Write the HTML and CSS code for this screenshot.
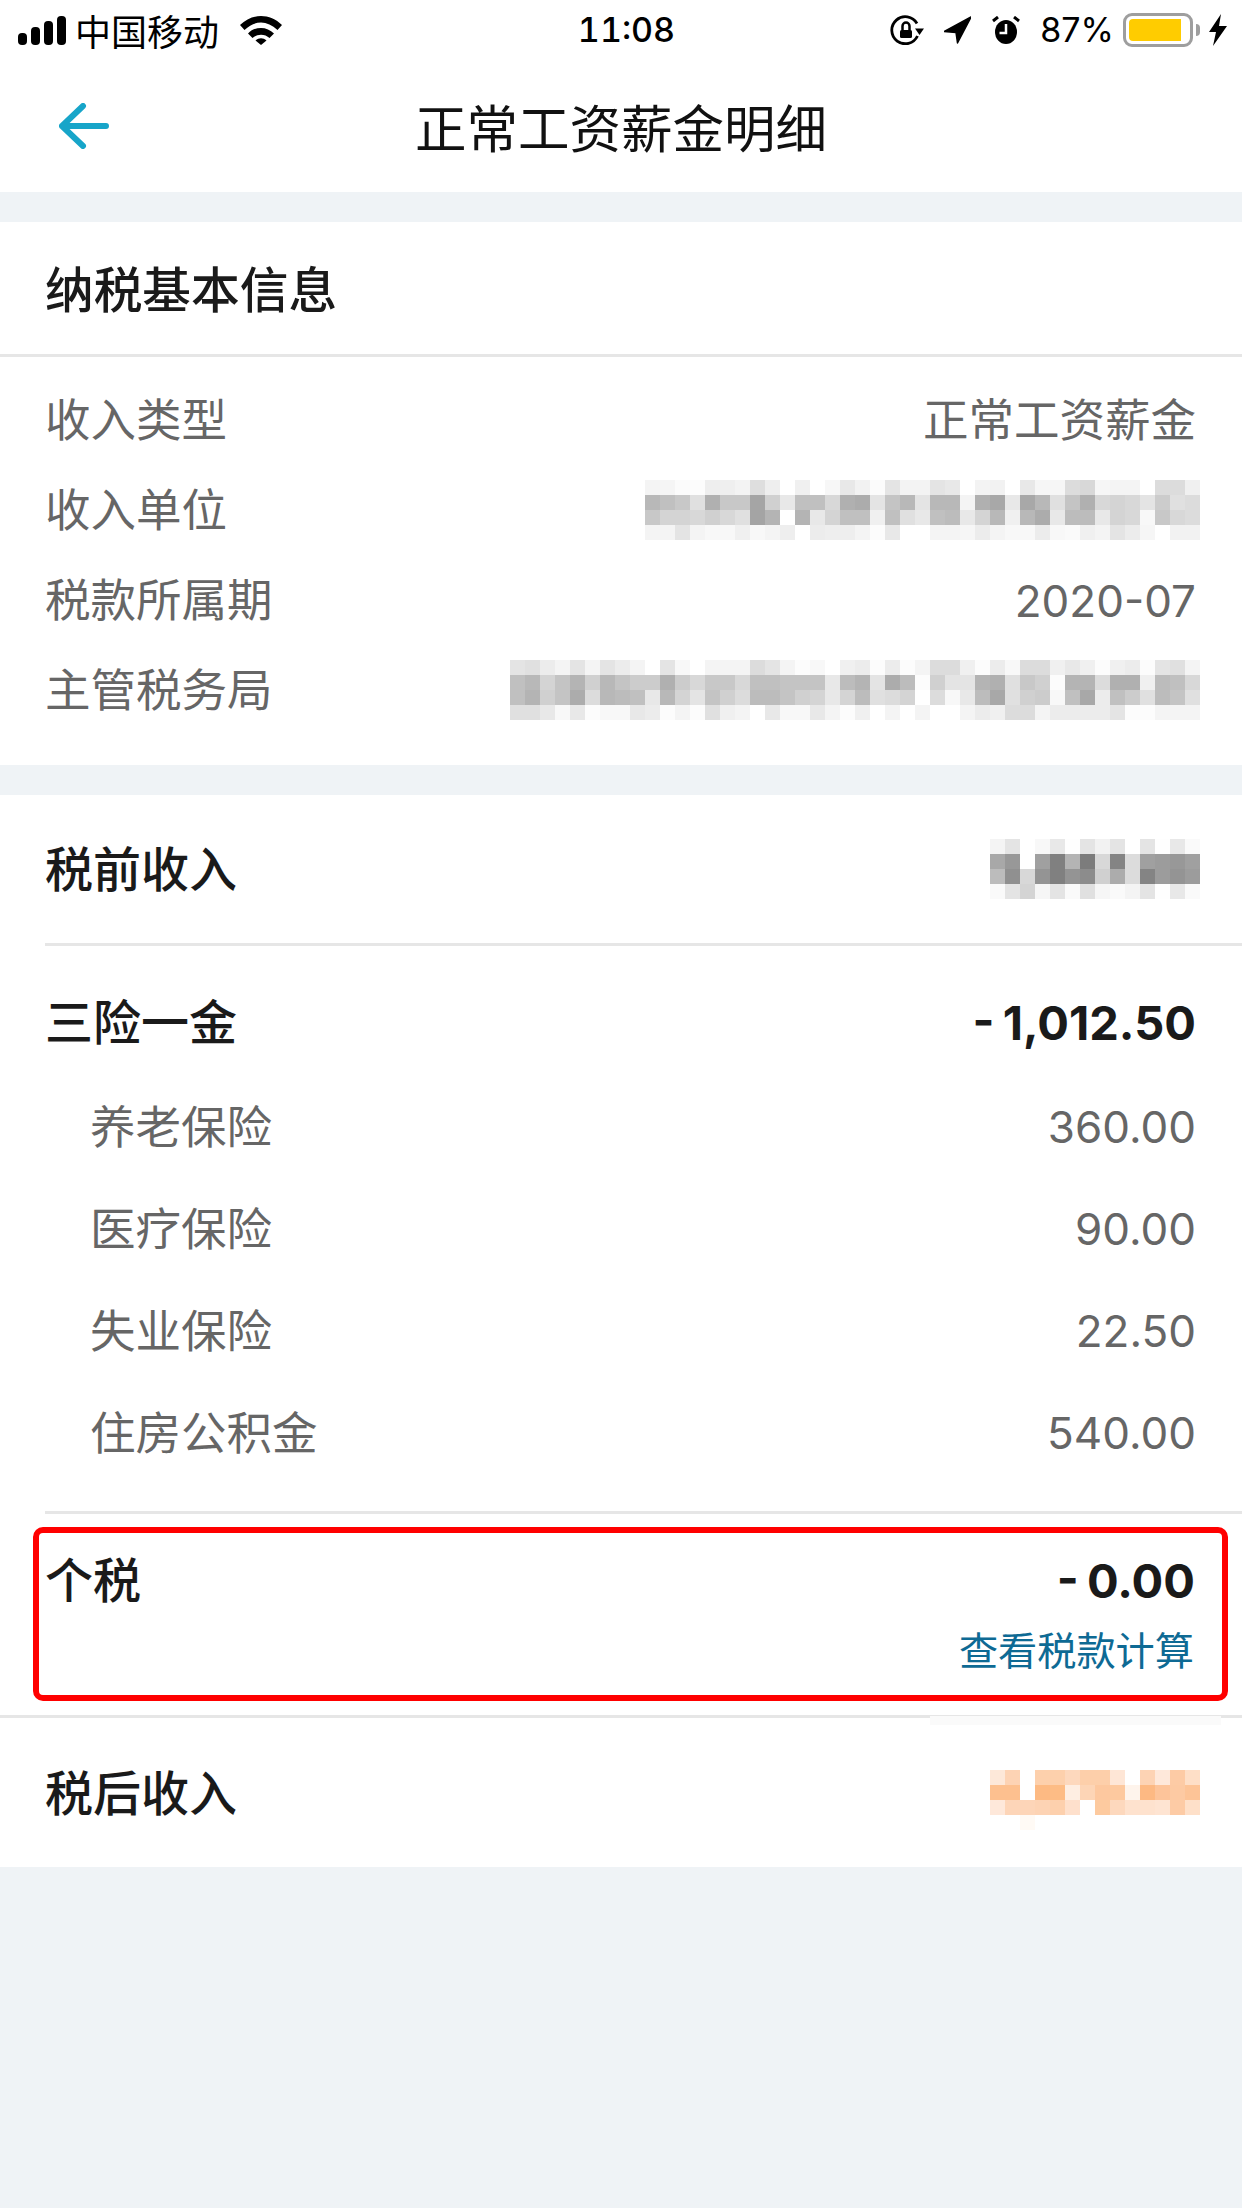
FILE: index.html
```html
<!DOCTYPE html>
<html lang="zh-CN">
<head>
<meta charset="utf-8">
<title>正常工资薪金明细</title>
<link rel="stylesheet" href="styles.css">
</head>
<body>
<div class="screen">
  <header class="status">
    <div class="status-left">
      <svg class="ic-signal" viewBox="0 0 48 29"><rect x="0" y="17" width="9" height="12" rx="4"/><rect x="13" y="11" width="9" height="18" rx="4"/><rect x="26" y="5" width="9" height="24" rx="4"/><rect x="39" y="0" width="9" height="29" rx="4"/></svg>
      <span class="carrier">中国移动</span>
      <svg class="ic-wifi" viewBox="0 0 42 29"><path d="M0 9C12-3 30-3 42 9L37.5 14C27 4 15 4 4.500 14Z"/><path d="M8 17.500C15 10 27 10 34 17.500L29.500 22C25 17.500 17 17.500 12.500 22Z"/><path d="M15.500 24.500C19 21.500 23 21.500 26.500 24.500L21 29Z"/></svg>
    </div>
    <div class="time">11:08</div>
    <div class="status-right">
      <svg class="ic-lock" viewBox="0 0 34 30"><path class="line" d="M27.500 21A13.500 13.500 0 1 1 27 8.500"/><path d="M25 13.500H34L29.500 20Z"/><rect x="10" y="15" width="12" height="8" rx="1.500"/><path class="line thin" d="M12.500 15V11A3.500 3.500 0 0 1 19.500 11V15"/></svg>
      <svg class="ic-loc" viewBox="0 0 27 28"><path d="M27 1L0 15.500 12 16.500 13.500 27Z" class="rounded"/></svg>
      <svg class="ic-alarm" viewBox="0 0 28 28"><ellipse cx="14" cy="16" rx="11" ry="12"/><path class="ear" d="M1 5L6 1M27 5L22 1"/><path class="hand" d="M14 8V17H7.500"/></svg>
      <span class="pct">87%</span>
      <div class="battery"><div class="battery-fill"></div></div>
      <div class="battery-nub"></div>
      <svg class="ic-bolt" viewBox="0 0 18 32"><path d="M12 0L0 18H7L4 32 18 12H10Z"/></svg>
    </div>
  </header>

  <nav class="nav">
    <svg class="back" viewBox="0 0 50 46"><path d="M24 3L3 23 24 43M3 23H47"/></svg>
    <h1 class="nav-title">正常工资薪金明细</h1>
    <span></span>
  </nav>

  <section class="card card-first">
    <h2 class="card-head">纳税基本信息</h2>
    <div class="info">
      <div class="row info-row"><span>收入类型</span><span>正常工资薪金</span></div>
      <div class="row info-row"><span>收入单位</span><div class="mosaic" data-key="unit"></div></div>
      <div class="row info-row"><span>税款所属期</span><span class="num">2020-07</span></div>
      <div class="row info-row"><span>主管税务局</span><div class="mosaic" data-key="bureau"></div></div>
    </div>
  </section>

  <section class="card card-second">
    <div class="row strong-row pre"><span class="lift">税前收入</span><div class="mosaic" data-key="gross"></div></div>
    <div class="rule-inset"></div>
    <div class="row strong-row ins"><span class="lift">三险一金</span><span class="num-b">- 1,012.50</span></div>
    <div class="subs">
      <div class="row sub-row"><span class="lift">养老保险</span><span class="num">360.00</span></div>
      <div class="row sub-row"><span class="lift">医疗保险</span><span class="num">90.00</span></div>
      <div class="row sub-row"><span class="lift">失业保险</span><span class="num">22.50</span></div>
      <div class="row sub-row"><span class="lift">住房公积金</span><span class="num">540.00</span></div>
    </div>
    <div class="rule-inset"></div>
    <div class="tax-box">
      <div class="tax-main"><span class="lift">个税</span><span class="num-b">- 0.00</span></div>
      <a class="tax-link">查看税款计算</a>
    </div>
    <div class="rule-full"></div>
    <div class="row strong-row post"><span class="lift">税后收入</span><div class="mosaic" data-key="net"></div><i class="smudge"></i></div>
  </section>
</div>
<script src="app.js"></script>
</body>
</html>
```

FILE: styles.css
```css
* { box-sizing: border-box; }
html, body { margin: 0; padding: 0; }
body { width: 1242px; height: 2208px; overflow: hidden; background: #eff3f6; font-family: Inter, "Noto Sans CJK SC", sans-serif; }
.screen { display: flex; flex-direction: column; width: 1242px; }

.status { display: grid; grid-template-columns: 1fr auto 1fr; align-items: center; height: 60px; background: #fff; color: #000; padding: 0 15px 0 18px; }
.status-left, .status-right { display: flex; align-items: center; }
.status-right { justify-content: flex-end; }
.status svg { display: block; fill: #000; }
.ic-signal { width: 48px; height: 29px; }
.carrier { font: 400 36px/60px "Noto Sans CJK SC", sans-serif; margin-left: 9px; }
.ic-wifi { width: 42px; height: 29px; margin-left: 21px; }
.time { font: 500 34px/60px Inter, sans-serif; font-variant-numeric: tabular-nums; margin-left: 8px; }
.pct { font: 400 34px/60px Inter, sans-serif; margin-left: 20px; }
.ic-lock { width: 34px; height: 30px; }
.ic-lock .line { fill: none; stroke: #000; stroke-width: 2.800; }
.ic-lock .thin { stroke-width: 2.500; }
.ic-loc { width: 27px; height: 28px; margin-left: 20px; }
.ic-loc .rounded { stroke: #000; stroke-width: 1.500; stroke-linejoin: round; }
.ic-alarm { width: 28px; height: 28px; margin-left: 21px; }
.ic-alarm .ear { fill: none; stroke: #000; stroke-width: 3; }
.ic-alarm .hand { fill: none; stroke: #fff; stroke-width: 2.500; }
.battery { width: 70px; height: 34px; margin-left: 9px; border: 3px solid #9e9e9e; border-radius: 9px; padding: 3px; }
.battery-fill { width: 52px; height: 22px; background: #fc0; border-radius: 4px 0 0 4px; }
.battery-nub { width: 4px; height: 12px; margin-left: 3px; background: #9e9e9e; border-radius: 0 4px 4px 0; }
.ic-bolt { width: 18px; height: 32px; margin-left: 9px; }

.nav { display: grid; grid-template-columns: 1fr auto 1fr; align-items: center; height: 132px; background: #fff; padding-left: 59px; }
.back { width: 50px; height: 46px; fill: none; stroke: #17a5c9; stroke-width: 6; stroke-linecap: round; stroke-linejoin: round; }
.nav-title { margin: 0 0 0 -59px; font: 400 51.500px/132px "Noto Sans CJK SC", sans-serif; color: #111; }

.card { background: #fff; }
.card-first { margin-top: 30px; }
.card-second { margin-top: 30px; padding-bottom: 0; }
.card-head { margin: 0; height: 135px; padding: 0 45px; border-bottom: 3px solid #e6e6e6; font: 500 48.700px/130px "Noto Sans CJK SC", sans-serif; color: #1a1a1a; }
.info { padding: 18px 0 30px; }
.row { display: flex; justify-content: space-between; align-items: center; }
.lift { padding-bottom: 6px; }
.info-row { height: 90px; padding: 0 46px 0 45px; font: 400 45.500px/90px Inter, "Noto Sans CJK SC", sans-serif; color: #666; }
.info-row > span { padding-top: 2px; }
.info-row .mosaic { margin-right: -4px; }
.num { font: 400 44px/1 Inter, sans-serif; color: #666; }
.num-b { font: 700 47px/1 Inter, sans-serif; word-spacing: -3px; color: #1a1a1a; }
.strong-row { padding: 0 46px 0 45px; font: 500 48px/60px "Noto Sans CJK SC", sans-serif; color: #1a1a1a; }
.strong-row .mosaic { margin-right: -4px; }
.pre { height: 148px; }
.ins { height: 130px; padding-top: 22px; }
.post { position: relative; height: 149px; }
.subs { padding-bottom: 27px; }
.sub-row { height: 102px; padding: 0 46px 0 90px; font: 400 45.500px/96px "Noto Sans CJK SC", sans-serif; color: #666; }
.rule-inset { height: 3px; margin-left: 45px; background: #e6e6e6; }
.rule-full { height: 3px; background: #e6e6e6; margin-top: 14px; }

.tax-box { display: flex; flex-direction: column; height: 174px; margin: 13px 14px 0 33px; padding: 0 27px 0 6px; border: 6px solid #f00; border-radius: 10px; }
.tax-main { display: flex; justify-content: space-between; align-items: center; height: 82px; margin-top: 6px; font: 500 48px/72px "Noto Sans CJK SC", sans-serif; color: #1a1a1a; }
.tax-link { align-self: flex-end; margin-right: 1px; font: 400 39.200px/54px "Noto Sans CJK SC", sans-serif; color: #0e6a94; }

.mosaic { display: grid; grid-auto-flow: row; grid-auto-columns: 15px; grid-auto-rows: 15px; }
.mosaic span { display: block; width: 15px; height: 15px; }
.smudge { position: absolute; left: 930px; top: -2px; width: 291px; height: 9px; background: #fafafa; }
```

FILE: app.js
```js
var gray = {
  unit: [
    "f4 f5 fb fc ee ef f3 de ee ff f0 ff f7 e8 f2 fb e4 f3 f3 e4 e8 ff f3 f2 ff e8 f6 f6 dc d8 f6 f4 f4 ff dc dc f0",
    "b8 c0 c8 e0 b0 c8 c8 a5 d0 e8 c0 c0 d8 b0 ac e4 c4 b8 e4 b8 b8 f4 b0 a8 e8 a8 b8 e0 c4 b0 d8 d4 d8 e4 cc e0 dc",
    "c8 d4 d4 d8 d0 d8 e0 a4 b4 ff b4 e8 d4 c0 c0 f0 c0 e0 e8 c0 bc e8 d4 b8 f0 b8 ac e8 bc bc e8 d4 d8 f8 c8 d8 dc",
    "f4 f4 e4 f4 f8 f8 f0 f8 f4 ee ff ec ee ee f4 fc e8 ff ff f4 f4 f6 ec f4 f8 f8 ec f8 fa f0 f4 e4 ec f6 ff f2 f2"
  ],
  bureau: [
    "e4 e0 ec f4 e4 f4 e4 ec f4 ff e4 f8 ff f4 f4 f4 dc e4 f4 fc f8 ff f0 ec fc ec fc f4 dc dc f0 fc ec f8 dc dc f0 e8 f0 fc f0 ec fc e4 e0 f4",
    "c0 b8 d4 c4 b4 d0 b8 c4 cc cc b0 cc d8 c8 c8 d8 c0 c0 c4 c4 c4 e8 bc b4 e4 ac bc fc d0 e4 e4 b4 b0 e0 c8 d0 fc b4 b4 dc b0 b0 f0 bc c0 d8",
    "c0 b4 d0 c4 ac dc b8 bc c0 e8 b8 d4 e4 c4 d0 dc bc bc c4 d0 d4 e8 d4 bc e0 dc d4 ff dc f8 e8 bc a8 e0 d0 cc f8 c0 a8 ec c0 cc e0 bc c4 e0",
    "e0 e0 e8 f8 e8 fc f8 f8 e8 ec fc f4 fc e0 f0 f4 ff e8 f8 f8 e8 f4 fc f0 ff f4 ff f4 ff ff f4 ec f0 dc dc f4 ec ec ec ec e4 fc fc f4 f4 f4"
  ],
  gross: [
    "f4 e4 ff f8 e8 fe e4 f2 e4 ff e4 fe e8 fa",
    "a8 98 ff a0 80 b4 7c d8 84 dc a0 9c 98 a0",
    "bc 90 d8 94 80 94 8c d0 ac dc 84 9c 94 9c",
    "fa e4 d4 f6 e4 fa e0 f6 fa f4 e4 fe e8 fa"
  ]
};
var tinted = {
  net: [
    "ffffff ffffff ffffff ffffff ffffff ffffff ffffff ffffff ffffff ffffff ffffff ffffff ffffff ffffff",
    "fde8d9 fdd3b4 ffffff fdd0ac fdd0ac fdd8bd fdcfaa fdcfaa fee6d6 ffffff fdd3b4 fee8da fdcba5 fedfc7",
    "fdc08f fdc08f ffffff fdba83 fdbc85 feeee2 fdd5b6 fdc89f fdc99f fef4ec fdb983 fdc49a fdcaa3 fdc497",
    "fee8da fdd5b8 fdd5b8 fdd3b4 fdd0ad fee0cc ffffff fdca9f fdd8bd fee2ce fee2ce fee4d2 fdcba5 fee0c9",
    "ffffff ffffff fffaf5 ffffff ffffff ffffff ffffff ffffff ffffff ffffff ffffff ffffff ffffff ffffff"
  ]
};
function paint(el, rows, toColor) {
  rows.forEach(function (row, r) {
    row.split(" ").forEach(function (v, c) {
      var s = document.createElement("span");
      s.style.gridRow = r + 1;
      s.style.gridColumn = c + 1;
      s.style.background = toColor(v);
      el.appendChild(s);
    });
  });
}
document.querySelectorAll(".mosaic").forEach(function (el) {
  var k = el.dataset.key;
  if (gray[k]) paint(el, gray[k], function (v) { return "#" + v + v + v; });
  else paint(el, tinted[k], function (v) { return "#" + v; });
});
```
